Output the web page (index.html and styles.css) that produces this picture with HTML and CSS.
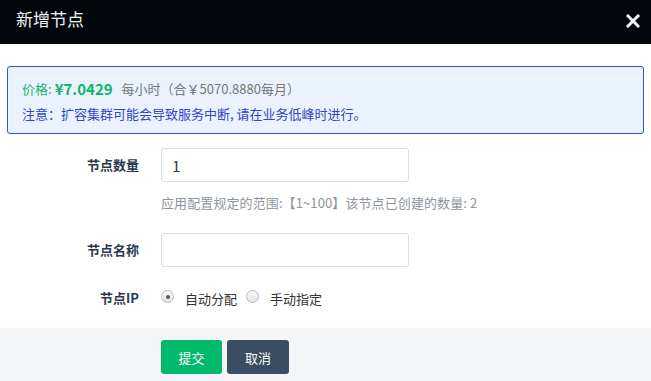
FILE: index.html
```html
<!DOCTYPE html>
<html lang="zh">
<head>
    <meta charset="UTF-8">
    <title>新增节点</title>
    <link rel="stylesheet" href="styles.css">
</head>
<body>
    <div class="dialog">
        <div class="dialog-header">
            <span class="dialog-title">新增节点</span>
            <span class="dialog-close">
                <svg width="14" height="14" viewBox="0 0 14 14"><path d="M2 2 L12 12 M12 2 L2 12" stroke="#eef2f6" stroke-width="3" stroke-linecap="square"/></svg>
            </span>
        </div>

        <div class="notice">
            <div class="price-line">
                <span class="price-label">价格:</span>
                <span class="price-value">¥7.0429</span>
                <span class="price-unit">每小时（合￥5070.8880每月）</span>
            </div>
            <div class="warn-line">注意：扩容集群可能会导致服务中断, 请在业务低峰时进行。</div>
        </div>

        <div class="form">
            <div class="form-row row-count">
                <label class="form-label">节点数量</label>
                <div class="form-field">
                    <input type="text" class="text-input" value="1">
                    <div class="help">应用配置规定的范围:【1~100】该节点已创建的数量: 2</div>
                </div>
            </div>
            <div class="form-row row-name">
                <label class="form-label">节点名称</label>
                <div class="form-field">
                    <input type="text" class="text-input">
                </div>
            </div>
            <div class="form-row row-ip">
                <label class="form-label">节点IP</label>
                <div class="form-field radios">
                    <span class="radio checked"></span><span class="radio-text">自动分配</span>
                    <span class="radio"></span><span class="radio-text">手动指定</span>
                </div>
            </div>
        </div>

        <div class="dialog-footer">
            <button class="btn btn-submit">提交</button>
            <button class="btn btn-cancel">取消</button>
        </div>
    </div>
</body>
</html>
```

FILE: styles.css
```css
body {
    margin: 0;
    font-family: "Noto Sans CJK SC", "Noto Sans", sans-serif;
    background: #fff;
}
.dialog {
    width: 651px;
    height: 381px;
    overflow: hidden;
    background: #fff;
}
.dialog-header {
    height: 44px;
    background: #03070b;
    display: flex;
    align-items: center;
    justify-content: space-between;
    padding: 0 11px 0 16px;
}
.dialog-title {
    color: #f2f4f7;
    font-size: 17px;
    margin-top: -7px;
}
.dialog-close {
    display: flex;
    margin-top: -2px;
}
.notice {
    margin: 22px 7px 0 7px;
    height: 68px;
    box-sizing: border-box;
    border: 1px solid #3550d8;
    border-radius: 3px;
    background: #e9f2fe;
    padding: 8px 14px 0 14px;
    font-size: 13px;
}
.price-line {
    height: 26px;
    display: flex;
    align-items: center;
}
.price-label {
    color: #18b46c;
}
.price-value {
    color: #10b568;
    font-weight: bold;
    font-size: 15px;
    margin-left: 3px;
    margin-right: 9px;
}
.price-unit {
    color: #777;
}
.warn-line {
    color: #3346c8;
    line-height: 26px;
}
.form {
    padding-top: 14px;
    height: 180px;
}
.form-row {
    display: flex;
}
.row-count {
    margin-bottom: 21px;
}
.row-name {
    margin-bottom: 18px;
}
.form-label {
    width: 139px;
    text-align: right;
    font-size: 13px;
    font-weight: bold;
    color: #2c3a4b;
    line-height: 34px;
    margin-right: 22px;
}
.text-input {
    display: block;
    width: 248px;
    height: 34px;
    box-sizing: border-box;
    border: 1px solid #d8dfe9;
    border-radius: 3px;
    padding: 0 10px;
    font-family: inherit;
    font-size: 15px;
    color: #2f3d4d;
    outline: none;
}
.help {
    font-size: 13px;
    line-height: 19px;
    color: #8e959c;
    margin-top: 11px;
    letter-spacing: 0.1px;
}
.row-ip .form-label {
    line-height: 26px;
}
.radios {
    display: flex;
    align-items: center;
    height: 26px;
    font-size: 13px;
    color: #333;
}
.radio {
    width: 13px;
    height: 13px;
    border-radius: 50%;
    border: 1px solid #b4b8be;
    background: linear-gradient(#fbfbfb, #e1e3e6);
    box-sizing: border-box;
    position: relative;
    margin-top: -3px;
    margin-right: 11px;
}
.radio.checked::after {
    content: "";
    position: absolute;
    left: 3.5px;
    top: 3.5px;
    width: 4px;
    height: 4px;
    border-radius: 50%;
    background: #555;
}
.radio-text {
    margin-right: 9px;
}
.dialog-footer {
    background: #f4f5f9;
    height: 53px;
    padding: 12px 0 0 161px;
    display: flex;
    align-items: flex-start;
    gap: 5px;
}
.btn {
    height: 34px;
    border: none;
    border-radius: 3px;
    color: #fff;
    font-family: inherit;
    font-size: 13px;
    cursor: pointer;
}
.btn-submit {
    width: 61px;
    background: #00b96c;
}
.btn-cancel {
    width: 62px;
    background: #3b4d63;
}
```
